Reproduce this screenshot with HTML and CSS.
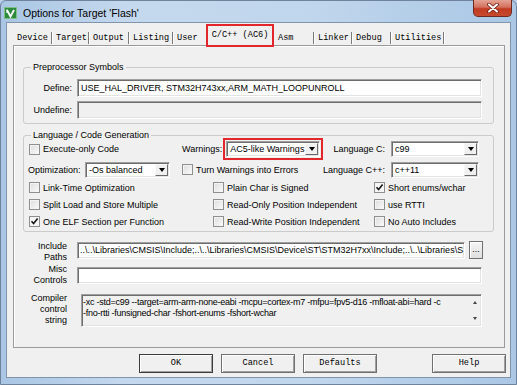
FILE: index.html
```html
<!DOCTYPE html>
<html>
<head>
<meta charset="utf-8">
<title>Options for Target 'Flash'</title>
<link rel="stylesheet" href="styles.css">
</head>
<body>
<div class="window">
  <div class="titlebar">
    <svg class="appicon" width="13" height="12" viewBox="0 0 13 12">
      <rect x="0.5" y="0.5" width="12" height="11" fill="#2e8b3e" stroke="#7fc08a"/>
      <path d="M3 3 L6.5 9.5 L10 3" fill="none" stroke="#fff" stroke-width="1.8"/>
      <path d="M3 2.5 V6" fill="none" stroke="#fff" stroke-width="1.2"/>
    </svg>
    <span class="title">Options for Target 'Flash'</span>
    <div class="close">
      <svg width="14" height="10" viewBox="0 0 14 10">
        <path d="M3 1.5 L11 8.5 M11 1.5 L3 8.5" stroke="#6b1c12" stroke-width="3.6" stroke-linecap="round"/>
        <path d="M3 1.5 L11 8.5 M11 1.5 L3 8.5" stroke="#fff" stroke-width="2" stroke-linecap="round"/>
      </svg>
    </div>
  </div>

  <div class="client">
    <div class="tabs">
      <div class="tab">Device</div>
      <div class="tab">Target</div>
      <div class="tab">Output</div>
      <div class="tab">Listing</div>
      <div class="tab tab-plain">User</div>
      <div class="tab tab-active">C/C++ (AC6)</div>
      <div class="tab">Asm</div>
      <div class="tab">Linker</div>
      <div class="tab">Debug</div>
      <div class="tab">Utilities</div>
    </div>

    <div class="panel">
      <fieldset class="group g-pre">
        <legend>Preprocessor Symbols</legend>
        <div class="sym-grid">
          <span class="lbl-r">Define:</span>
          <div class="edit">USE_HAL_DRIVER, STM32H743xx,ARM_MATH_LOOPUNROLL</div>
          <span class="lbl-r">Undefine:</span>
          <div class="edit edit-grey"></div>
        </div>
      </fieldset>

      <fieldset class="group g-lang">
        <legend>Language / Code Generation</legend>
        <div class="lrow lrow-1">
          <div class="cell-a"><span class="cb"></span>Execute-only Code</div>
          <span class="lbl">Warnings:</span>
          <div class="combo combo-warn"><span class="ctext">AC5-like Warnings</span><span class="drop"></span></div>
          <div class="rgroup">
            <span class="lbl">Language C:</span>
            <div class="combo combo-lang"><span class="ctext">c99</span><span class="drop"></span></div>
          </div>
        </div>
        <div class="lrow lrow-2">
          <span class="lbl lbl-opt">Optimization:</span>
          <div class="combo combo-opt"><span class="ctext">-Os balanced</span><span class="drop"></span></div>
          <div class="cell-b"><span class="cb"></span>Turn Warnings into Errors</div>
          <div class="rgroup">
            <span class="lbl">Language C++:</span>
            <div class="combo combo-lang"><span class="ctext">c++11</span><span class="drop"></span></div>
          </div>
        </div>
        <div class="cbgrid">
          <div class="cbitem"><span class="cb"></span>Link-Time Optimization</div>
          <div class="cbitem"><span class="cb"></span>Plain Char is Signed</div>
          <div class="cbitem"><span class="cb cb-on"><svg width="9" height="9" viewBox="0 0 9 9"><path d="M1.5 4.2 L3.6 6.6 L7.6 1.6" fill="none" stroke="#1a1a1a" stroke-width="1.6"/></svg></span>Short enums/wchar</div>

          <div class="cbitem"><span class="cb"></span>Split Load and Store Multiple</div>
          <div class="cbitem"><span class="cb"></span>Read-Only Position Independent</div>
          <div class="cbitem"><span class="cb"></span>use RTTI</div>

          <div class="cbitem"><span class="cb cb-on"><svg width="9" height="9" viewBox="0 0 9 9"><path d="M1.5 4.2 L3.6 6.6 L7.6 1.6" fill="none" stroke="#1a1a1a" stroke-width="1.6"/></svg></span>One ELF Section per Function</div>
          <div class="cbitem"><span class="cb"></span>Read-Write Position Independent</div>
          <div class="cbitem"><span class="cb"></span>No Auto Includes</div>
        </div>
      </fieldset>

      <div class="frow frow-inc">
        <span class="flbl">Include<br>Paths</span>
        <div class="edit edit-inc">..\..\Libraries\CMSIS\Include;..\..\Libraries\CMSIS\Device\ST\STM32H7xx\Include;..\..\Libraries\S</div>
        <div class="dots">...</div>
      </div>
      <div class="frow frow-misc">
        <span class="flbl">Misc<br>Controls</span>
        <div class="edit edit-misc"></div>
      </div>
      <div class="frow frow-cc">
        <span class="flbl">Compiler<br>control<br>string</span>
        <div class="ccbox">
          <div class="cctext">-xc -std=c99 --target=arm-arm-none-eabi -mcpu=cortex-m7 -mfpu=fpv5-d16 -mfloat-abi=hard -c<br>-fno-rtti -funsigned-char -fshort-enums -fshort-wchar</div>
          <div class="vscroll"><span class="up"></span><span class="down"></span></div>
        </div>
      </div>
    </div>

    <div class="btnrow">
      <div class="btn btn-default">OK</div>
      <div class="btn">Cancel</div>
      <div class="btn">Defaults</div>
      <div class="btn btn-help">Help</div>
    </div>
  </div>
</div>
</body>
</html>
```

FILE: styles.css
```css
* { box-sizing: border-box; }
html, body { margin: 0; padding: 0; }
body {
  width: 517px;
  height: 385px;
  overflow: hidden;
  background: #b9d1ea;
  font-family: "Liberation Sans", Arial, sans-serif;
  font-size: 9px;
  color: #000;
}
.window {
  height: 385px;
  display: flex;
  flex-direction: column;
  border: 1px solid #6f849c;
  border-radius: 6px 6px 0 0;
  background: linear-gradient(90deg, #a9c6e4 0%, #c5d9ee 25%, #c0d6ec 60%, #aac7e5 100%);
}
.titlebar {
  height: 21px;
  display: flex;
  align-items: center;
  padding-left: 3px;
}
.appicon { margin-top: 3px; flex: none; }
.title {
  margin-left: 6px;
  margin-top: 2px;
  font-family: "Liberation Sans", Arial, sans-serif;
  font-size: 10.5px;
  color: #000;
  white-space: nowrap;
}
.close {
  margin-left: auto;
  margin-right: 4px;
  align-self: flex-start;
  margin-top: -1px;
  width: 39px;
  height: 17px;
  border: 1px solid #6e2a20;
  border-top: none;
  border-radius: 0 0 5px 5px;
  background: linear-gradient(#e5a395 0%, #d3705c 45%, #c23a22 55%, #c64a2e 100%);
  display: flex;
  align-items: center;
  justify-content: center;
}

.client {
  flex: 1;
  margin: 0 5px 6px 5px;
  background: #f0f0f0;
  border: 1px solid #8094ac;
  display: flex;
  flex-direction: column;
}

/* tabs */
.tabs {
  height: 22px;
  margin-left: 6px;
  display: grid;
  grid-template-columns: 39px 37px 40px 44px 33px 68px 40px 38px 39px 53px;
  align-items: start;
  font-family: "Liberation Mono", "Courier New", monospace;
  font-size: 8.6px;
}
.tab {
  margin-top: 9px;
  height: 12px;
  line-height: 12px;
  padding-left: 4px;
  border-right: 1px solid #7a7a7a;
  box-shadow: 1px 0 0 #ffffff;
  white-space: nowrap;
}
.tab-plain { border-right-color: transparent; box-shadow: none; }
.tab-active {
  position: relative;
  z-index: 2;
  margin: 3px 2px 0 2px;
  height: 19px;
  line-height: 19px;
  padding: 0;
  text-align: center;
  border: none;
  box-shadow: none;
  background: #f0f0f0;
  outline: 2px solid #e3262b;
}

/* panel */
.panel {
  height: 303px;
  margin: 0 5px 0 6px;
  border: 1px solid #9a9a9a;
  box-shadow: inset 1px 1px 0 #ffffff;
  padding: 16px 10px 0 9px;
}
.group {
  margin: 0;
  min-width: 0;
  border: 1px solid #cbcbcb;
  border-radius: 3px;
}
.group legend {
  padding: 0 2px;
  line-height: 11px;
  font-size: 9px;
}
.g-pre { padding: 6px 11px 4px 0; }
.g-pre legend { margin-left: 7px; }
.sym-grid {
  display: grid;
  grid-template-columns: 48px 1fr;
  column-gap: 5px;
  row-gap: 4px;
  align-items: center;
}
.lbl-r { text-align: right; }

.edit {
  height: 18px;
  background: #fff;
  border: 1px solid;
  border-color: #a0a0a0 #ffffff #ffffff #a0a0a0;
  box-shadow: inset 1px 1px 0 #6d6d6d, inset -1px -1px 0 #e3e3e3;
  padding: 0 3px;
  line-height: 16px;
  white-space: nowrap;
  overflow: hidden;
}
.edit-grey { background: #f0f0f0; }

.g-lang { margin-top: 6px; padding: 0 14px 1px 4px; }
.g-lang legend { margin-left: 3px; }
.lrow { display: flex; align-items: center; }
.lrow-1 { height: 16px; }
.lrow-2 { height: 17px; margin-top: 4px; }
.cell-a { width: 154px; display: flex; align-items: center; }
.cell-a .cb { margin-left: 1px; }
.cell-b { display: flex; align-items: center; margin-left: 12px; }
.lbl-opt { width: 57px; }
.rgroup { margin-left: auto; display: flex; align-items: center; }
.rgroup .combo { margin-left: 6px; }

.cb {
  width: 11px;
  height: 11px;
  flex: none;
  margin-right: 3px;
  border: 1px solid #8e8f8f;
  background: linear-gradient(135deg, #dcdcdc, #fbfbfb);
  box-shadow: inset 1px 1px 0 #f4f4f4;
  display: flex;
  align-items: center;
  justify-content: center;
}
.cb-on { background: #f6f6f6; }

.combo {
  height: 16px;
  display: flex;
  align-items: stretch;
  background: #fff;
  border: 1px solid;
  border-color: #a0a0a0 #ffffff #ffffff #a0a0a0;
  box-shadow: inset 1px 1px 0 #6d6d6d, inset -1px -1px 0 #e3e3e3;
  padding: 1px;
}
.ctext { flex: 1; padding-left: 2px; line-height: 12px; white-space: nowrap; overflow: hidden; }
.drop {
  width: 13px;
  flex: none;
  background: #f0f0f0;
  border: 1px solid;
  border-color: #f7f7f7 #6a6a6a #6a6a6a #f7f7f7;
  display: flex;
  align-items: center;
  justify-content: center;
}
.drop::before {
  content: "";
  border-left: 3.5px solid transparent;
  border-right: 3.5px solid transparent;
  border-top: 4px solid #000;
}
.combo-warn {
  width: 94px;
  margin-left: 4px;
  outline: 2px solid #e3262b;
  outline-offset: 1px;
}
.combo-lang { width: 88px; }
.combo-opt { width: 85px; }

.cbgrid {
  display: grid;
  grid-template-columns: 184px 161px 1fr;
  grid-auto-rows: 17px;
  margin-top: 1px;
}
.cbitem { display: flex; align-items: center; white-space: nowrap; }
.cbitem .cb { margin-left: 1px; }

/* lower rows */
.frow { display: flex; gap: 10px; }
.flbl { width: 44px; flex: none; text-align: right; line-height: 11px; }
.frow-inc { margin-top: 9px; }
.frow-inc .edit { width: 388px; height: 17px; margin-top: 1px; line-height: 15px; padding-left: 2px; }
.dots {
  width: 14px;
  height: 18px;
  margin-left: -6px;
  border: 1px solid #707070;
  background: linear-gradient(#f6f6f6, #dedede);
  box-shadow: inset 1px 1px 0 #fff;
  text-align: center;
  line-height: 14px;
  font-size: 9px;
}
.frow-misc { margin-top: 1px; }
.edit-misc { width: 405px; height: 17px; margin-top: 3px; }
.frow-cc { margin-top: 7px; }
.ccbox {
  width: 401px;
  height: 33px;
  margin-top: 1px;
  margin-left: 4px;
  background: #f0f0f0;
  border: 1px solid;
  border-color: #a0a0a0 #ffffff #ffffff #a0a0a0;
  box-shadow: inset 1px 1px 0 #6d6d6d, inset -1px -1px 0 #e3e3e3;
  display: flex;
}
.cctext {
  flex: 1;
  padding: 2px 0 0 1px;
  line-height: 11px;
  letter-spacing: -0.25px;
  white-space: nowrap;
  overflow: hidden;
}
.vscroll {
  width: 12px;
  flex: none;
  display: flex;
  flex-direction: column;
  justify-content: space-between;
  align-items: center;
  padding: 6px 0 6px;
}
.up, .down { width: 0; height: 0; border-left: 2px solid transparent; border-right: 2px solid transparent; }
.up { border-bottom: 3px solid #444; }
.down { border-top: 3px solid #444; }

/* buttons */
.btnrow {
  display: flex;
  gap: 8px;
  margin-top: 6px;
  padding: 0 4px 0 132px;
}
.btn {
  width: 74px;
  height: 19px;
  border: 1px solid #707070;
  background: #f0f0f0;
  box-shadow: inset 1px 1px 0 #ffffff, inset -1px -1px 0 #a0a0a0;
  font-family: "Liberation Mono", "Courier New", monospace;
  font-size: 8.6px;
  line-height: 17px;
  text-align: center;
}
.btn-default { border-color: #3c3c3c; }
.btn-help { margin-left: auto; }
```
